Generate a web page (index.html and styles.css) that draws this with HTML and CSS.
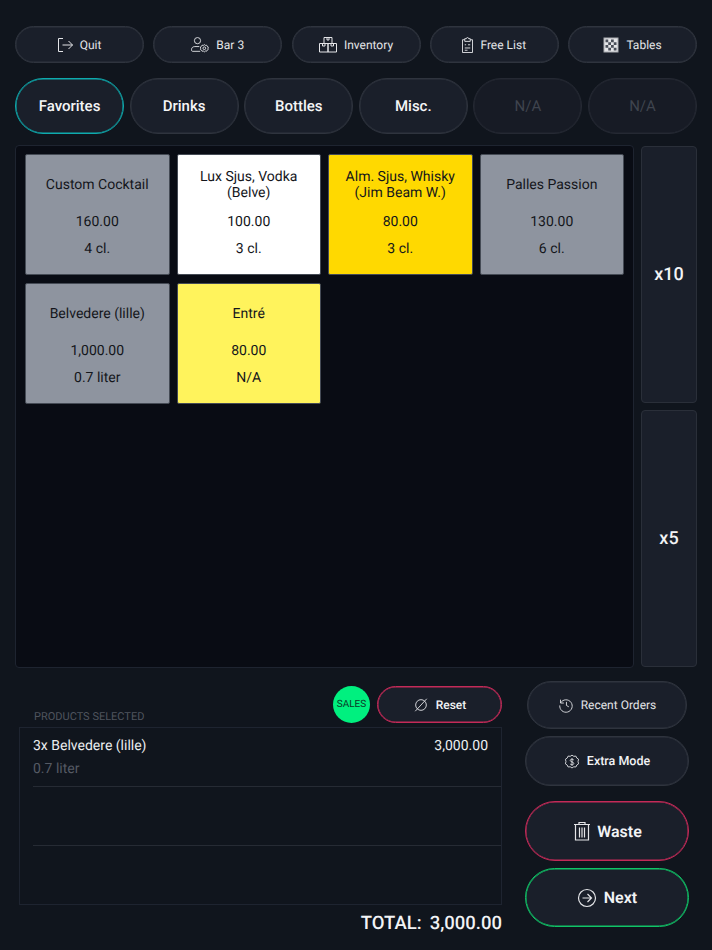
FILE: index.html
```html
<!DOCTYPE html>
<html lang="en">
<head>
<meta charset="utf-8">
<title>POS</title>
<link rel="stylesheet" href="styles.css">
</head>
<body>
<div class="app">
  <nav class="top">
    <button class="pill top-btn"><svg class="ic i-quit" viewBox="2 2 15 14"><path d="M7 2.500H2.500v13H7M6.500 9h10M12.500 5l4 4-4 4"/></svg>Quit</button>
    <button class="pill top-btn"><svg class="ic i-bar" viewBox="0.500 0.500 19.500 17"><circle cx="7.500" cy="4.500" r="3.400"/><path d="M9.500 11H4.500C2.500 11 1 12.300 1 14v1.200c0 .6.5 1 1 1h8.500"/><path d="M15 8.800l1.100.9 1.400-.2.6 1.200 1.200.7-.3 1.400.3 1.400-1.200.7-.6 1.200-1.400-.2-1.100.9-1.100-.9-1.400.2-.6-1.200-1.200-.7.3-1.400-.3-1.400 1.200-.7.6-1.200 1.400.2z"/><circle cx="15" cy="12.800" r="1.500"/></svg>Bar 3</button>
    <button class="pill top-btn"><svg class="ic i-inv" viewBox="1 1 18 15.500"><path d="M6 1.500h8v6H6zM1.500 7.500h8.500v8.500H1.500zM10 7.500h8.500v8.500H10zM9 1.500v2.500h2V1.500M4.500 7.500V10h2.500V7.500M13 7.500V10h2.500V7.500"/></svg>Inventory</button>
    <button class="pill top-btn"><svg class="ic i-free" viewBox="3 0 12 17.500"><path d="M6 3H3.500v14h11V3H12"/><path d="M6 1.800h1.800a1.200 1.200 0 0 1 2.400 0H12v3H6zM6 8.500h1.500M9.500 8.500H12M6 12h6M6 14.500h3"/></svg>Free List</button>
    <button class="pill top-btn"><svg class="ic chk" viewBox="0 0 16 16"><rect x="1" y="1" width="14" height="14" class="chk-bg"/><path class="chk-sq" d="M2.500 2.500h2.750v2.750H2.500zM8 2.500h2.750v2.750H8zM5.250 5.250H8V8H5.250zM10.750 5.250h2.750V8h-2.750zM2.500 8h2.750v2.750H2.500zM8 8h2.750v2.750H8zM5.250 10.750H8v2.750H5.250zM10.750 10.750h2.750v2.750h-2.750z"/></svg>Tables</button>
  </nav>

  <nav class="tabs">
    <button class="pill tab active">Favorites</button>
    <button class="pill tab">Drinks</button>
    <button class="pill tab">Bottles</button>
    <button class="pill tab">Misc.</button>
    <button class="pill tab off">N/A</button>
    <button class="pill tab off">N/A</button>
  </nav>

  <section class="main">
    <div class="panel">
      <div class="card grey"><div class="name">Custom Cocktail</div><div>160.00</div><div>4 cl.</div></div>
      <div class="card white"><div class="name">Lux Sjus, Vodka (Belve)</div><div>100.00</div><div>3 cl.</div></div>
      <div class="card gold"><div class="name">Alm. Sjus, Whisky (Jim Beam W.)</div><div>80.00</div><div>3 cl.</div></div>
      <div class="card grey"><div class="name">Palles Passion</div><div>130.00</div><div>6 cl.</div></div>
      <div class="card grey"><div class="name">Belvedere (lille)</div><div>1,000.00</div><div>0.7 liter</div></div>
      <div class="card lemon"><div class="name">Entré</div><div>80.00</div><div>N/A</div></div>
    </div>
    <div class="mult">
      <button class="mult-btn">x10</button>
      <button class="mult-btn">x5</button>
    </div>
  </section>

  <section class="bottom">
    <div class="order">
      <div class="order-head">
        <span class="label">PRODUCTS SELECTED</span>
        <span class="sales">SALES</span>
        <button class="pill reset"><svg class="ic" viewBox="0 0 18 18"><circle cx="9" cy="9" r="6"/><path d="M2.500 16L15.500 2"/></svg>Reset</button>
      </div>
      <div class="list">
        <div class="row"><div class="line"><span>3x Belvedere (lille)</span><span>3,000.00</span></div><div class="sub">0.7 liter</div></div>
        <div class="row"></div>
        <div class="row last"></div>
      </div>
      <div class="total"><span>TOTAL:</span><span>3,000.00</span></div>
    </div>
    <div class="actions">
      <button class="pill recent"><svg class="ic" viewBox="0 0 18 18"><path d="M2.800 3v3.800h3.800"/><path d="M3 6.500A7 7 0 1 1 2 9.500M9.500 5.500v4l2.700 1.600"/></svg>Recent Orders</button>
      <button class="pill extra"><svg class="ic" viewBox="0 0 18 18"><path d="M9 1.800l2 1.300 2.400-.2 1 2.200 2 1.300-.6 2.600.6 2.600-2 1.300-1 2.200-2.400-.2-2 1.300-2-1.300-2.400.2-1-2.200-2-1.300.6-2.600-.6-2.600 2-1.300 1-2.200 2.400.2z" transform="translate(0 -.5)"/><path d="M11 6.800C10.500 6 9.800 5.800 9 5.800c-1.200 0-2 .6-2 1.500 0 2 4 1.200 4 3.300 0 1-.9 1.600-2 1.600-.9 0-1.600-.3-2.100-1.100M9 4.800v8.400"/></svg>Extra Mode</button>
      <button class="pill big waste"><svg class="ic large" viewBox="0 0 18 20"><path d="M1 3.500h16M6 3.500V1.500h6v2M2.500 3.500v15.500h13V3.500M6.500 6.500v10M9 6.500v10M11.500 6.500v10"/></svg>Waste</button>
      <button class="pill big next"><svg class="ic large" viewBox="0 0 20 20"><circle cx="10" cy="10" r="8.500"/><path d="M5.500 10h9M10.500 6l4 4-4 4"/></svg>Next</button>
    </div>
  </section>
</div>
</body>
</html>
```
FILE: styles.css
```css
* { box-sizing: border-box; }
html, body { margin: 0; height: 100%; }
body {
  background: #10151d;
  color: #f2f3f5;
  font-family: Roboto, "Liberation Sans", sans-serif;
  text-rendering: geometricPrecision;
  overflow: hidden;
}
.app { width: 712px; height: 950px; padding: 26px 15px 0; }

button { font-family: inherit; color: inherit; cursor: pointer; text-rendering: geometricPrecision; }
.pill {
  --edge: #2f343e;
  display: flex;
  align-items: center;
  justify-content: center;
  background: #1a1f2a;
  border: 1px solid var(--edge);
  box-shadow: inset 0 0 0 .5px var(--edge);
  border-radius: 999px;
  padding: 0;
}
.ic {
  fill: none;
  stroke: #e4e5e8;
  stroke-width: 1;
  width: 16px;
  height: 16px;
  flex: none;
}
.i-quit { width: 15px; height: 14px; }
.i-bar { width: 18px; height: 15.500px; }
.i-inv { width: 18px; height: 15.500px; }
.i-free { width: 11px; height: 16px; }
.ic.large { width: 20px; height: 20px; stroke-width: 1.200; }
.ic.chk { width: 16px; height: 16px; }
.chk-bg { fill: #e4e5e8; stroke: #a9abb0; }
.chk-sq { fill: #4a4f59; stroke: none; }

.top {
  display: grid;
  grid-template-columns: repeat(5, 129px);
  justify-content: space-between;
  height: 37px;
}
.top-btn { font-size: 12px; gap: 7px; color: #e4e5e8; padding-top: 1px; }

.tabs {
  display: grid;
  grid-template-columns: repeat(6, 109px);
  justify-content: space-between;
  height: 56px;
  margin-top: 15px;
}
.tab { font-size: 15px; font-weight: 500; color: #f4f5f6; }
.tab.active { --edge: #0eabae; }
.tab.off { --edge: #252933; color: #3f444e; font-weight: 400; background: #171b25; }

.main { display: flex; gap: 7px; height: 523px; margin-top: 11px; }
.panel {
  width: 619px;
  background: #090c14;
  border: 1px solid #1e2430;
  border-radius: 4px;
  padding: 8px 9px;
  display: grid;
  grid-template-columns: repeat(4, 144.500px);
  grid-auto-rows: 121px;
  column-gap: 7px;
  row-gap: 8px;
  align-content: start;
}
.card {
  border-radius: 2px;
  border: 1px solid #454b55;
  color: #14161b;
  font-size: 14px;
  text-align: center;
  display: grid;
  grid-template-rows: 50px 28px 28px;
  align-content: start;
  align-items: center;
  padding: 5px 8px 0;
  line-height: 16px;
}
.card > div:nth-child(2) { margin-top: -5px; }
.card > div:nth-child(3) { margin-top: -6px; }
.name { line-height: 16px; }
.grey { background: #8e949f; }
.white { background: #fff; }
.gold { background: #ffd900; }
.lemon { background: #fff35c; }

.mult { width: 56px; display: flex; flex-direction: column; gap: 7px; padding: 1px 0; }
.mult-btn {
  flex: 1;
  background: #1a1f2a;
  border: 1px solid #2a2f39;
  border-radius: 4px;
  font-size: 18px;
  font-weight: 500;
  padding: 0;
}

.bottom { display: flex; margin-top: 13px; padding-left: 4px; }
.order { width: 483px; }
.order-head {
  display: flex;
  align-items: flex-start;
  height: 46px;
  padding-top: 5px;
}
.label {
  color: #4f545e;
  font-size: 11px;
  margin: 24px auto 0 15px;
}
.sales {
  width: 37px;
  height: 37px;
  border-radius: 50%;
  background: #00f07f;
  color: #0b3a28;
  font-size: 10px;
  display: flex;
  align-items: center;
  justify-content: center;
  margin-right: 7px;
}
.reset {
  --edge: #c42a58;
  width: 125px;
  height: 37px;
  font-size: 12px;
  font-weight: 500;
  gap: 7px;
  padding-top: 1px;
}
.list { height: 178px; border: 1px solid #1e2430; padding-left: 13px; }
.row { height: 59px; border-bottom: 1px solid #262b34; padding-top: 8px; }
.row.last { border-bottom: 0; }
.line {
  display: flex;
  justify-content: space-between;
  padding-right: 13px;
  font-size: 14px;
  line-height: 20px;
  color: #eceef0;
}
.sub { font-size: 14px; line-height: 20px; margin-top: 3px; color: #555a64; }
.total {
  display: flex;
  justify-content: flex-end;
  gap: 8px;
  font-size: 18.500px;
  font-weight: 500;
  margin-top: 7px;
  line-height: 22px;
}

.actions {
  width: 164px;
  margin-left: 23px;
  display: flex;
  flex-direction: column;
  align-items: center;
}
.recent { width: 160px; height: 48px; font-size: 12px; gap: 7px; color: #e4e5e8; }
.extra { width: 164px; height: 50px; margin-top: 7px; font-size: 12.500px; font-weight: 500; gap: 7px; padding-top: 1px; }
.big { width: 164px; height: 59px; font-size: 16px; font-weight: 600; gap: 7px; }
.waste { --edge: #c42a58; margin-top: 15px; height: 60px; gap: 5px; }
.next { --edge: #10c467; margin-top: 7px; }
```
